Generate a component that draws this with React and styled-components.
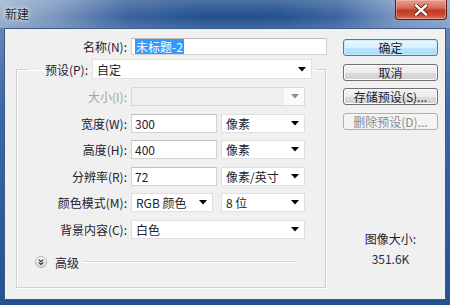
import React from "react";
import styled, { createGlobalStyle, css } from "styled-components";

const GlobalStyle = createGlobalStyle`
  html, body { margin: 0; padding: 0; }
  body {
    width: 450px; height: 305px; overflow: hidden;
    font-family: "Noto Sans CJK SC", "Noto Sans", sans-serif;
    font-size: 12px; color: #1e2230;
  }
  * { box-sizing: border-box; }
`;

const Window = styled.div`
  width: 450px; height: 305px;
  display: flex; flex-direction: column;
  background: linear-gradient(180deg, #7390bb 0%, #3c69a7 35%, #24518f 100%);
`;

const TitleBar = styled.div`
  height: 28px; flex: none;
  display: flex; justify-content: space-between; align-items: flex-start;
  background:
    linear-gradient(180deg, rgba(255,255,255,0.18) 0%, rgba(255,255,255,0) 60%, rgba(120,150,195,0.35) 100%),
    linear-gradient(90deg, #9fb3cf 0%, #7d98bf 12%, #3a639d 28%, #23508f 45%, #24518f 62%, #3b659f 75%, #7896c2 88%, #90a9cb 100%);
`;

const Title = styled.span`
  padding: 5px 0 0 5px;
  font-size: 12px; line-height: 17px;
  color: #1a1a1a;
  text-shadow: 0 0 5px rgba(255,255,255,0.95), 0 0 2px rgba(255,255,255,0.9);
`;

const CloseButton = styled.div`
  width: 52px; height: 20px; margin-right: 3px;
  display: flex; align-items: center; justify-content: center;
  border: 1px solid #5a1e17; border-top: none;
  border-radius: 0 0 4px 4px;
  background: linear-gradient(180deg, #e7a08f 0%, #d56f5c 40%, #c23a27 55%, #cc4a35 80%, #dc7a62 100%);
  box-shadow: inset 0 0 0 1px rgba(255,200,190,0.45);
`;

const Client = styled.div`
  flex: 1;
  margin: 0 4px 5px;
  border: 1px solid #3d5a85;
  background: #f0f0f0;
  display: flex; align-items: flex-start;
  padding: 9px 0 0 11px;
`;

const LeftCol = styled.div`
  width: 311px;
  display: flex; flex-direction: column;
`;

const NameRow = styled.div`
  display: grid;
  grid-template-columns: 111px 196px;
  column-gap: 4px;
  align-items: center;
  height: 17px;
`;

const Label = styled.span`
  text-align: right; white-space: nowrap;
  line-height: 17px;
  color: ${p => (p.$disabled ? "#a3a3a3" : "#1e2230")};
`;

const TextBox = styled.div`
  height: ${p => p.$h || 19}px;
  width: ${p => (p.$w ? `${p.$w}px` : "auto")};
  background: #fff;
  border: 1px solid #d3d3d3;
  border-top-color: #bdbdbd;
  display: flex; align-items: center;
  padding-left: 3px;
  line-height: 15px;
  white-space: nowrap;
  ${p => p.$span && css`grid-column: span 2;`}
`;

const Selected = styled.span`
  background: #3399ff; color: #fff;
  padding: 0 1px;
  line-height: 15px;
`;

const SelectBox = styled.div`
  height: ${p => p.$h || 19}px;
  width: ${p => (p.$w ? `${p.$w}px` : "auto")};
  background: ${p => (p.$disabled ? "#efefef" : "#fff")};
  border: 1px solid ${p => (p.$disabled ? "#d9d9d9" : "#e0e0e0")};
  display: flex; align-items: center; justify-content: space-between;
  padding-left: 4px;
  white-space: nowrap;
  ${p => p.$span && css`grid-column: span 2;`}
`;

const ArrowZone = styled.div`
  width: 20px; height: 100%;
  display: flex; align-items: center; justify-content: center;
  background: ${p => (p.$disabled ? "#fbfbfb" : "transparent")};
  padding-left: 1px;
`;

const GroupBox = styled.fieldset`
  margin: 4px 0 0 0;
  width: 310px; height: 229px;
  border: 1px solid #d0d0d0;
  box-shadow: inset 1px 1px 0 #fff, 1px 1px 0 #fff;
  padding: 8px 0 0 0;
  min-width: 0;
`;

const Legend = styled.legend`
  margin-left: 10px;
  padding: 0 5px 0 0;
  display: flex; align-items: center; gap: 4px;
`;

const LegendLabel = styled(Label)`
  width: 61px;
`;

const FormGrid = styled.div`
  display: grid;
  grid-template-columns: 110px 86px 84px;
  grid-auto-rows: 19px;
  column-gap: 4px; row-gap: 7.5px;
  align-items: center;
`;

const AdvancedRow = styled.div`
  display: flex; align-items: center;
  margin: 15px 28px 0 18px;
  gap: 8px;
  height: 17px;
`;

const Rule = styled.div`
  flex: 1;
  margin-left: -3px;
  border-top: 1px solid #d3d3d3;
  border-bottom: 1px solid #fff;
`;

const RightCol = styled.div`
  width: 95px;
  margin: 1px 0 0 16px;
  display: flex; flex-direction: column; gap: 7.5px;
`;

const Button = styled.div`
  height: 17px;
  border: 1px solid ${p => (p.$disabled ? "#adb2b5" : p.$default ? "#3c7fb1" : "#707070")};
  border-radius: 3px;
  display: flex; align-items: center; justify-content: center;
  line-height: 15px;
  color: ${p => (p.$disabled ? "#8a8a8a" : "#1e2230")};
  background: ${p =>
    p.$disabled
      ? "#f4f4f4"
      : p.$default
      ? "linear-gradient(180deg, #eaf6fd 0%, #d9f0fc 50%, #bee6fd 51%, #a7d9f5 100%)"
      : "linear-gradient(180deg, #f2f2f2 0%, #ebebeb 50%, #dddddd 51%, #cfcfcf 100%)"};
  box-shadow: ${p => (p.$disabled ? "none" : p.$default ? "inset 0 0 0 1px #c6ecfd" : "inset 0 0 0 1px #fcfcfc")};
`;

const SizeInfo = styled.div`
  margin-top: 92px;
  display: flex; flex-direction: column; align-items: center;
  line-height: 20px;
`;

const SizeValue = styled.span`
  color: #1f2d4c;
`;

const Arrow = ({ disabled }) => (
  <svg width="8" height="5" viewBox="0 0 8 5">
    <path d="M0 0 H8 L4 4.5 Z" fill={disabled ? "#8d8d8d" : "#000"} />
  </svg>
);

const Select = ({ children, disabled, ...rest }) => (
  <SelectBox $disabled={disabled} {...rest}>
    <span>{children}</span>
    <ArrowZone $disabled={disabled}>
      <Arrow disabled={disabled} />
    </ArrowZone>
  </SelectBox>
);

const CloseIcon = () => (
  <svg width="14" height="12" viewBox="0 0 14 12">
    <path d="M2 1.5 L12 10.5 M12 1.5 L2 10.5" stroke="#5a1a12" strokeWidth="4" strokeLinecap="square" />
    <path d="M2 1.5 L12 10.5 M12 1.5 L2 10.5" stroke="#fff" strokeWidth="2.4" strokeLinecap="square" />
  </svg>
);

const ExpandIcon = () => (
  <svg width="12" height="12" viewBox="0 0 12 12">
    <defs>
      <linearGradient id="expg" x1="0" y1="0" x2="0" y2="1">
        <stop offset="0" stopColor="#ffffff" />
        <stop offset="1" stopColor="#d4d4d4" />
      </linearGradient>
    </defs>
    <circle cx="6" cy="6" r="5.5" fill="url(#expg)" stroke="#b5b5b5" strokeWidth="1" />
    <path d="M3.8 3.6 L6 5.6 L8.2 3.6 M3.8 6.4 L6 8.4 L8.2 6.4" fill="none" stroke="#333" strokeWidth="1.2" />
  </svg>
);

export default function App() {
  return (
    <>
      <GlobalStyle />
      <Window>
        <TitleBar>
          <Title>新建</Title>
          <CloseButton>
            <CloseIcon />
          </CloseButton>
        </TitleBar>
        <Client>
          <LeftCol>
            <NameRow>
              <Label>名称(N):</Label>
              <TextBox $h={17}>
                <Selected>未标题-2</Selected>
              </TextBox>
            </NameRow>
            <GroupBox>
              <Legend>
                <LegendLabel>预设(P):</LegendLabel>
                <Select $w={220} $h={20}>自定</Select>
              </Legend>
              <FormGrid>
                <Label $disabled>大小(I):</Label>
                <Select $span disabled> </Select>

                <Label>宽度(W):</Label>
                <TextBox>300</TextBox>
                <Select>像素</Select>

                <Label>高度(H):</Label>
                <TextBox>400</TextBox>
                <Select>像素</Select>

                <Label>分辨率(R):</Label>
                <TextBox>72</TextBox>
                <Select>像素/英寸</Select>

                <Label>颜色模式(M):</Label>
                <Select $w={82}>RGB 颜色</Select>
                <Select>8 位</Select>

                <Label>背景内容(C):</Label>
                <Select $span>白色</Select>
              </FormGrid>
              <AdvancedRow>
                <ExpandIcon />
                <span>高级</span>
                <Rule />
              </AdvancedRow>
            </GroupBox>
          </LeftCol>
          <RightCol>
            <Button $default>确定</Button>
            <Button>取消</Button>
            <Button>存储预设(S)...</Button>
            <Button $disabled>删除预设(D)...</Button>
            <SizeInfo>
              <span>图像大小:</span>
              <SizeValue>351.6K</SizeValue>
            </SizeInfo>
          </RightCol>
        </Client>
      </Window>
    </>
  );
}
